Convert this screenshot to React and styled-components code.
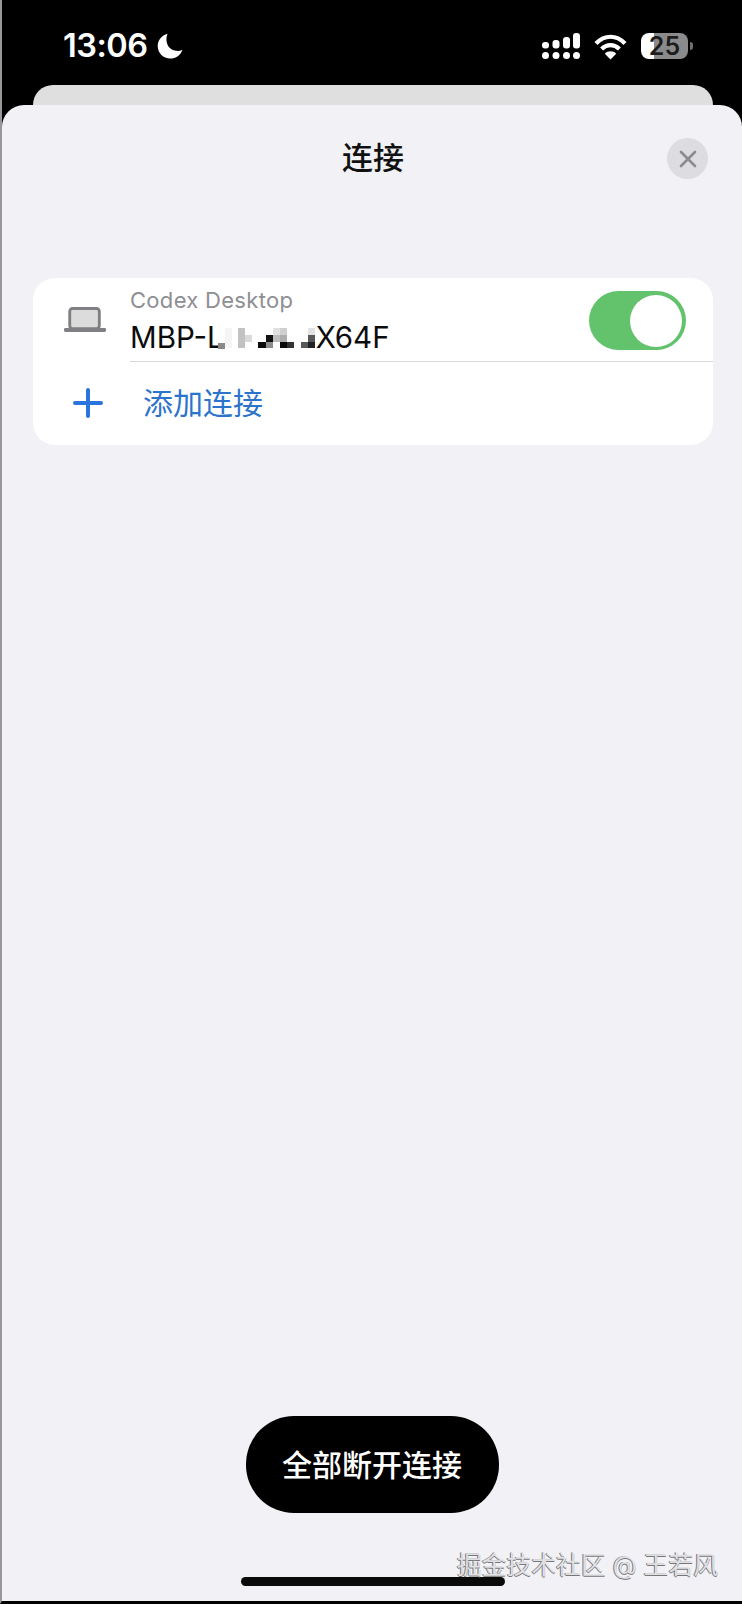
import React from "react";
import styled, { createGlobalStyle } from "styled-components";

const Global = createGlobalStyle`
  html, body { margin: 0; padding: 0; background: #000; }
  * { box-sizing: border-box; }
`;

const CJK = `Inter, "Noto Sans CJK SC", sans-serif`;

const Page = styled.div`
  width: 742px;
  height: 1604px;
  display: flex;
  flex-direction: column;
  background: #000;
  border-left: 2px solid #98989c;
  border-bottom: 3px solid #000;
  font-family: ${CJK};
  position: relative;
  overflow: hidden;
`;

const StatusBar = styled.div`
  height: 85px;
  display: flex;
  align-items: flex-start;
  justify-content: space-between;
  padding: 28px 54px 0 61px;
  flex: none;
`;

const StatusLeft = styled.div`
  display: flex;
  align-items: center;
  gap: 9px;
`;

const Time = styled.span`
  color: #fff;
  font-family: Inter, sans-serif;
  font-size: 32.5px;
  line-height: 36px;
  font-weight: 600;
  letter-spacing: -0.5px;
`;

const StatusRight = styled.div`
  display: flex;
  align-items: center;
  gap: 14px;
  height: 36px;
`;

const Battery = styled.div`
  position: relative;
  width: 47px;
  height: 26px;
  border-radius: 8px;
  background: linear-gradient(90deg, #fff 0 13px, #8b8b8b 13px 100%);
  display: flex;
  align-items: center;
  justify-content: center;
  font-family: Inter, sans-serif;
  font-size: 25px;
  font-weight: 600;
  color: #1c1c1c;
  line-height: 26px;
  &::after {
    content: "";
    position: absolute;
    right: -5px;
    top: 9px;
    width: 3px;
    height: 8px;
    border-radius: 0 3px 3px 0;
    background: #6f6f6f;
  }
`;

const BackSheet = styled.div`
  flex: none;
  height: 20px;
  margin: 0 29px 0 31px;
  border-radius: 20px 20px 0 0;
  background: #dfdfdf;
`;

const Sheet = styled.div`
  flex: 1;
  display: flex;
  flex-direction: column;
  background: #f1f1f6;
  border-radius: 22px 22px 0 0;
  padding: 0 29px 0 31px;
  position: relative;
`;

const Header = styled.div`
  height: 173px;
  flex: none;
  padding-top: 31px;
  display: flex;
  justify-content: center;
  align-items: flex-start;
`;

const Title = styled.h1`
  margin: 0;
  font-family: ${CJK};
  font-size: 31px;
  line-height: 44px;
  font-weight: 500;
  color: #111;
`;

const CloseButton = styled.button`
  position: absolute;
  top: 33px;
  right: 34px;
  width: 41px;
  height: 41px;
  padding: 0;
  border: 0;
  border-radius: 50%;
  background: #dcdce1;
  display: flex;
  align-items: center;
  justify-content: center;
`;

const Card = styled.section`
  background: #fff;
  border-radius: 22px;
  display: flex;
  flex-direction: column;
  height: 167px;
  flex: none;
`;

const ConnectionRow = styled.div`
  height: 84px;
  display: flex;
  flex: none;
`;

const IconCell = styled.div`
  width: 97px;
  flex: none;
  display: flex;
  align-items: flex-start;
  padding: 29px 0 0 31px;
`;

const RowBody = styled.div`
  flex: 1;
  display: flex;
  justify-content: space-between;
  align-items: flex-start;
  border-bottom: 1px solid #d9d9dc;
  padding: 6px 27px 0 0;
`;

const RowText = styled.div`
  display: flex;
  flex-direction: column;
`;

const Caption = styled.span`
  font-family: Inter, sans-serif;
  font-size: 22px;
  line-height: 33px;
  color: #8e8e93;
  letter-spacing: 0.3px;
`;

const DeviceName = styled.span`
  font-family: Inter, sans-serif;
  font-size: 29.5px;
  line-height: 37px;
  margin-top: 2px;
  color: #0c0c0c;
  display: flex;
  align-items: center;
`;

const MosaicSlot = styled.svg`
  flex: none;
  margin: 1px 0 0 -6px;
`;

const Toggle = styled.div`
  width: 97px;
  height: 59px;
  margin-top: 7px;
  border-radius: 30px;
  background: #62c36c;
  display: flex;
  justify-content: flex-end;
  align-items: center;
  padding-right: 4px;
`;

const Knob = styled.div`
  width: 52px;
  height: 52px;
  border-radius: 50%;
  background: #fff;
`;

const AddRow = styled.div`
  flex: 1;
  display: flex;
  align-items: center;
  padding-bottom: 2px;
`;

const PlusCell = styled.div`
  width: 110px;
  flex: none;
  display: flex;
  padding-left: 40px;
`;

const AddLabel = styled.span`
  font-family: ${CJK};
  font-size: 30px;
  line-height: 44px;
  color: #2c73cb;
`;

const Footer = styled.div`
  margin-top: auto;
  display: flex;
  flex-direction: column;
  align-items: center;
  padding-bottom: 15px;
`;

const DisconnectButton = styled.button`
  width: 253px;
  height: 97px;
  margin-right: 2px;
  border: 0;
  border-radius: 48px;
  background: #000;
  color: #fff;
  font-family: ${CJK};
  font-size: 30px;
  font-weight: 500;
  padding: 0 0 4px;
`;

const HomeIndicator = styled.div`
  width: 264px;
  height: 9px;
  margin-top: 64px;
  border-radius: 5px;
  background: #0a0a0a;
`;

const Watermark = styled.span`
  position: absolute;
  right: 24px;
  bottom: 22px;
  font-family: ${CJK};
  font-size: 24.8px;
  line-height: 28px;
  color: rgba(245, 245, 248, 0.85);
  text-shadow: -1px 0 0 #77777a, 0 1px 0 #77777a;
  white-space: nowrap;
`;

const Moon = () => (
  <svg width="26" height="26" viewBox="0 0 26 26">
    <path d="M10.5 0.8C7.8 7.6 10 16.6 19 17.8c2.4.3 4.6-.1 6.4-1.1C23.600 22 18.900 25.600 13.300 25.600 6.300 25.600.7 20 .7 13 .7 7.200 4.800 2.200 10.500.8z" fill="#fff" />
  </svg>
);

const Signal = () => (
  <svg width="38" height="27" viewBox="0 0 38 27" fill="#fff">
    <rect x="0" y="9" width="7" height="6.500" rx="3" />
    <rect x="10.500" y="7" width="7" height="8.500" rx="3" />
    <rect x="21" y="4" width="7" height="11.500" rx="3" />
    <rect x="31" y="0" width="7" height="15.500" rx="3" />
    <circle cx="3.500" cy="22.500" r="3.500" />
    <circle cx="14" cy="22.500" r="3.500" />
    <circle cx="24.500" cy="22.500" r="3.500" />
    <circle cx="34.500" cy="22.500" r="3.500" />
  </svg>
);

const Wifi = () => (
  <svg width="33" height="27" viewBox="0 0 33 27" fill="none" stroke="#fff" strokeWidth="4.200">
    <path d="M2 10.500C10.500 1.500 22.500 1.500 31 10.500" />
    <path d="M7.600 16C12.800 10.800 20.200 10.800 25.400 16" />
    <path d="M16.500 26.500L10.800 20.700C14 17.500 19 17.500 22.200 20.700Z" fill="#fff" stroke="none" />
  </svg>
);

const Close = () => (
  <svg width="20" height="20" viewBox="0 0 20 20" fill="none" stroke="#8a8a8f" strokeWidth="2.600" strokeLinecap="round">
    <path d="M3 3L17 17M17 3L3 17" />
  </svg>
);

const Laptop = () => (
  <svg width="42" height="26" viewBox="0 0 44 27">
    <rect x="6" y="1.500" width="31" height="21" rx="3" fill="#dcdcdc" stroke="#808084" strokeWidth="3" />
    <rect x="0" y="22" width="44" height="4" rx="1.500" fill="#808084" />
  </svg>
);

const Plus = () => (
  <svg width="30" height="30" viewBox="0 0 30 30" fill="none" stroke="#2a74dc" strokeWidth="4" strokeLinecap="round">
    <path d="M15 2V28M2 15H28" />
  </svg>
);

const mosaic = [
  [0, 15, 7, 6, "#8a8a8a"],
  [7, 0, 7, 20, "#f5f5f5"],
  [20, 0, 7, 20, "#c2c2c2"],
  [27, 7, 7, 7, "#dadada"],
  [40, 14, 8, 6, "#0a0a0a"],
  [48, 7, 7, 7, "#111"],
  [48, 14, 7, 6, "#8c8c8c"],
  [55, 0, 7, 7, "#e0e0e0"],
  [55, 7, 7, 7, "#bdbdbd"],
  [62, 0, 7, 7, "#cfcfcf"],
  [62, 7, 7, 7, "#adadad"],
  [62, 14, 7, 6, "#0a0a0a"],
  [69, 14, 7, 6, "#333"],
  [83, 14, 7, 6, "#585858"],
  [90, 0, 7, 7, "#e2e2e2"],
  [90, 7, 7, 7, "#585858"],
  [90, 14, 7, 6, "#222"],
];

const Mosaic = () => (
  <MosaicSlot width="98" height="21" viewBox="0 0 98 21" shapeRendering="crispEdges">
    {mosaic.map(([x, y, w, h, c], i) => (
      <rect key={i} x={x} y={y} width={w} height={h} fill={c} />
    ))}
  </MosaicSlot>
);

export default function App() {
  return (
    <>
      <Global />
      <Page>
        <StatusBar>
          <StatusLeft>
            <Time>13:06</Time>
            <Moon />
          </StatusLeft>
          <StatusRight>
            <Signal />
            <Wifi />
            <Battery>25</Battery>
          </StatusRight>
        </StatusBar>
        <BackSheet />
        <Sheet>
          <Header>
            <Title>连接</Title>
          </Header>
          <CloseButton aria-label="关闭">
            <Close />
          </CloseButton>
          <Card>
            <ConnectionRow>
              <IconCell>
                <Laptop />
              </IconCell>
              <RowBody>
                <RowText>
                  <Caption>Codex Desktop</Caption>
                  <DeviceName>
                    MBP-L
                    <Mosaic />
                    X64F
                  </DeviceName>
                </RowText>
                <Toggle>
                  <Knob />
                </Toggle>
              </RowBody>
            </ConnectionRow>
            <AddRow>
              <PlusCell>
                <Plus />
              </PlusCell>
              <AddLabel>添加连接</AddLabel>
            </AddRow>
          </Card>
          <Footer>
            <DisconnectButton>全部断开连接</DisconnectButton>
            <HomeIndicator />
          </Footer>
          <Watermark>掘金技术社区 @ 王若风</Watermark>
        </Sheet>
      </Page>
    </>
  );
}
